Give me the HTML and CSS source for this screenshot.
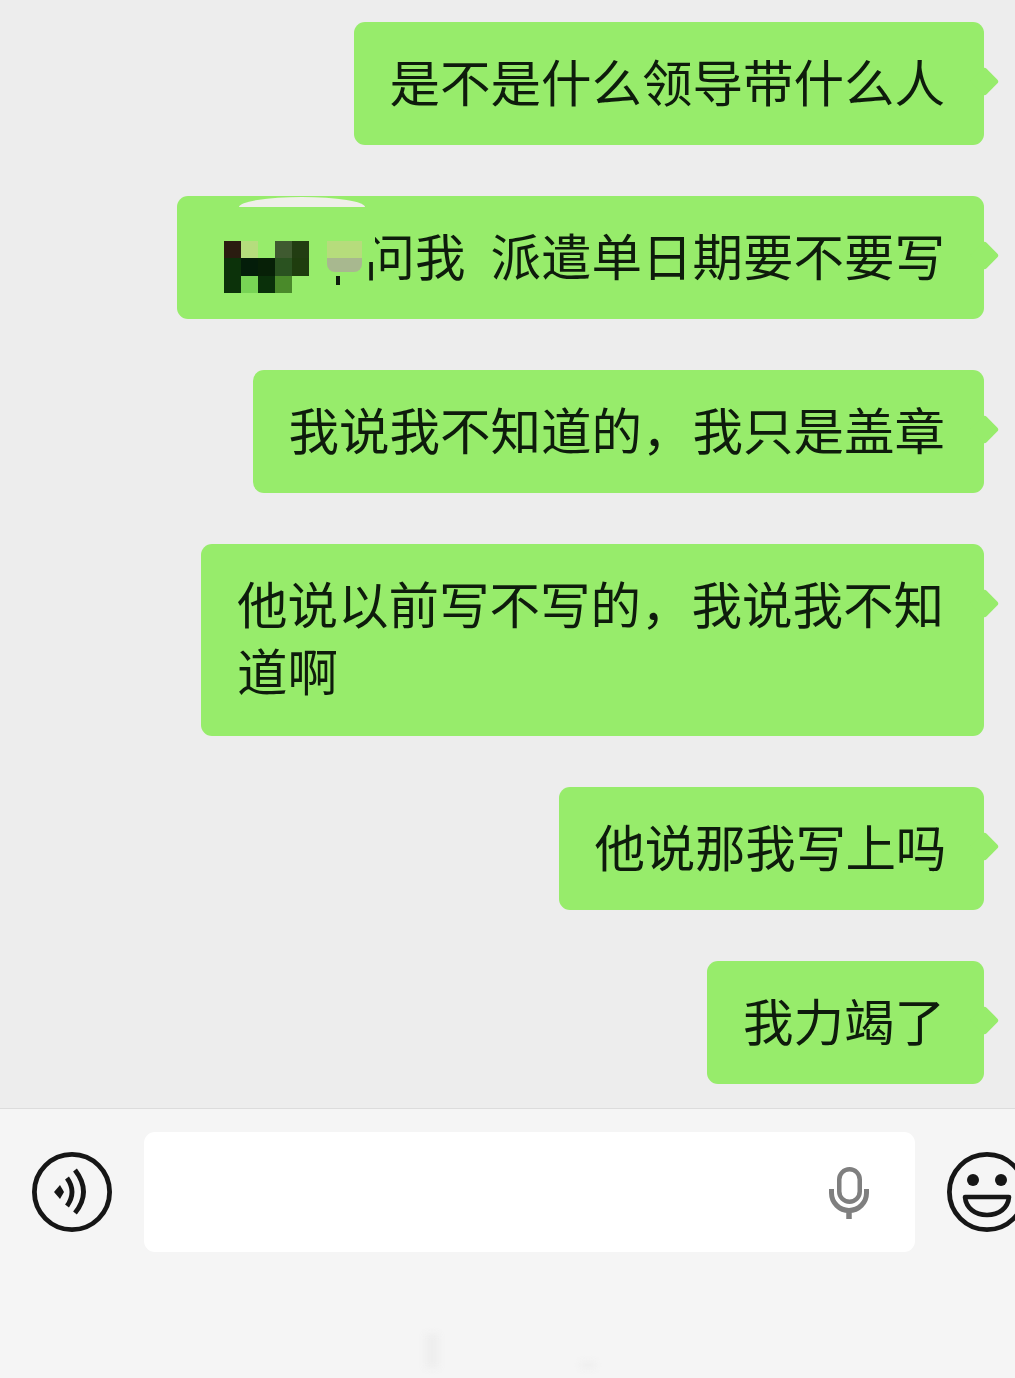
FILE: index.html
```html
<!DOCTYPE html>
<html lang="zh-CN">
<head>
<meta charset="utf-8">
<title>聊天</title>
<link rel="stylesheet" href="styles.css">
</head>
<body>
<main class="chat">
  <div class="messages">
    <div class="bubble">是不是什么领导带什么人</div>
    <div class="bubble"><span class="hidden-name"></span>问我<span class="gap"></span>派遣单日期要不要写
      <div class="mask-arc"></div>
      <div class="mask-wash"></div>
      <span class="stray"></span>
      <div class="mosaic">
        <i class="c1"></i><i class="c2"></i><i class="c3"></i><i class="c4"></i><i class="c5"></i>
        <i class="c6"></i><i class="c7"></i><i class="c8"></i><i class="c9"></i><i class="c10"></i>
        <i class="c6"></i><i class="c11"></i><i class="c12"></i><i class="c13"></i><i class="c3"></i>
      </div>
      <div class="mosaic-side"><i class="s1"></i><i class="s2"></i></div>
    </div>
    <div class="bubble">我说我不知道的，我只是盖章</div>
    <div class="bubble bubble-wrapped">他说以前写不写的，我说我不知道啊</div>
    <div class="bubble bubble-tight">他说那我写上吗</div>
    <div class="bubble">我力竭了</div>
  </div>
  <footer class="composer">
    <svg class="round-icon" viewBox="0 0 80 80" aria-hidden="true">
      <circle cx="40" cy="40" r="37.6" fill="none" stroke="#161616" stroke-width="4.8"/>
      <path d="M22 40 L28 33 L32 40 L28 47 Z" fill="#161616"/>
      <path d="M35 26 Q45 40 35 54" fill="none" stroke="#161616" stroke-width="4.8"/>
      <path d="M43 18 Q60 40 43 61" fill="none" stroke="#161616" stroke-width="4.8"/>
    </svg>
    <div class="input">
      <svg class="mic" viewBox="0 0 42 54" aria-hidden="true">
        <rect x="11.25" y="4.25" width="20.5" height="32.5" rx="10.25" fill="none" stroke="#7f7f7f" stroke-width="4.5"/>
        <path d="M3.5 24 V28 A17.5 17.5 0 0 0 38.5 28 V24" fill="none" stroke="#7f7f7f" stroke-width="5"/>
        <path d="M21 44 V54" fill="none" stroke="#7f7f7f" stroke-width="5.5"/>
      </svg>
    </div>
    <svg class="round-icon" viewBox="0 0 80 80" aria-hidden="true">
      <circle cx="40" cy="40" r="37.6" fill="none" stroke="#161616" stroke-width="4.8"/>
      <circle cx="26" cy="28" r="6" fill="#161616"/>
      <circle cx="54" cy="28" r="6" fill="#161616"/>
      <path d="M18 45 H62 C61 56 52 63 40 63 C28 63 19 56 18 45 Z" fill="none" stroke="#161616" stroke-width="4.6" stroke-linejoin="round"/>
    </svg>
    <span class="smudge smudge-a"></span>
    <span class="smudge smudge-b"></span>
  </footer>
</main>
</body>
</html>
```
FILE: styles.css
```css
* { box-sizing: border-box; }

html, body {
  margin: 0;
  height: 100%;
}

body {
  overflow: hidden;
  background: #ededed;
  font-family: "Noto Sans CJK SC", "Liberation Sans", sans-serif;
}

.chat {
  display: flex;
  flex-direction: column;
  width: 1015px;
  height: 1378px;
}

.messages {
  display: flex;
  flex-direction: column;
  align-items: flex-end;
  gap: 51px;
  height: 1108px;
  padding: 22px 31px 0 0;
  flex-shrink: 0;
}

.bubble {
  position: relative;
  padding: 25px 39px 31px 36px;
  border-radius: 11px;
  background: #97ec6b;
  color: #0e1c0c;
  font-size: 50.5px;
  line-height: 67px;
}

.bubble::after {
  content: "";
  position: absolute;
  top: 49px;
  right: -11px;
  width: 21px;
  height: 21px;
  border-radius: 3px;
  background: #97ec6b;
  transform: rotate(45deg);
}

.bubble-wrapped {
  width: 783px;
  padding-right: 38px;
  padding-bottom: 33px;
}

.bubble-tight {
  padding-right: 38px;
  letter-spacing: -0.3px;
}

.hidden-name {
  display: inline-block;
  width: 152px;
}

.gap {
  display: inline-block;
  width: 25px;
}

.mask-arc {
  position: absolute;
  top: 1px;
  left: 62px;
  width: 126px;
  height: 10px;
  border-radius: 50% 50% 0 0 / 100% 100% 0 0;
  background: #efefe9;
}

.mask-wash {
  position: absolute;
  top: 36px;
  left: 183px;
  width: 15px;
  height: 30px;
  background: #97ec6b;
}

.stray {
  position: absolute;
  top: 80px;
  left: 159px;
  width: 4px;
  height: 9px;
  background: #0e1c0c;
}

.mosaic {
  position: absolute;
  top: 45px;
  left: 47px;
  display: grid;
  grid-template-columns: repeat(5, 17.2px);
  grid-template-rows: repeat(3, 17.3px);
}

.mosaic .c1 { background: #2a1c10; }
.mosaic .c2 { background: #b5dd7d; }
.mosaic .c3 { background: transparent; }
.mosaic .c4 { background: #3f5a30; }
.mosaic .c5 { background: #223d12; }
.mosaic .c6 { background: #0c320a; }
.mosaic .c7 { background: #041d0a; }
.mosaic .c8 { background: #072007; }
.mosaic .c9 { background: #2a5220; }
.mosaic .c10 { background: #1f3d0e; }
.mosaic .c11 { background: #78d455; }
.mosaic .c12 { background: #0a300a; }
.mosaic .c13 { background: #4a8a2a; }

.mosaic-side {
  position: absolute;
  top: 45px;
  left: 150px;
  display: flex;
  flex-direction: column;
  width: 35px;
}

.mosaic-side .s1 {
  height: 17px;
  background: #b6dc7c;
}

.mosaic-side .s2 {
  height: 14px;
  border-radius: 0 0 8px 8px;
  background: #a8b88f;
}

.composer {
  position: relative;
  display: flex;
  align-items: flex-start;
  gap: 32px;
  flex: 1;
  padding: 23px 0 0 32px;
  overflow: hidden;
  border-top: 1px solid #dcdcdc;
  background: #f5f5f5;
}

.round-icon {
  flex-shrink: 0;
  width: 80px;
  height: 80px;
  margin-top: 20px;
}

.input {
  display: flex;
  align-items: center;
  justify-content: flex-end;
  flex-shrink: 0;
  width: 771px;
  height: 120px;
  padding-right: 45px;
  border-radius: 11px;
  background: #fff;
}

.mic {
  width: 42px;
  height: 54px;
}

.smudge {
  position: absolute;
  background: #eeeeee;
  filter: blur(3px);
}

.smudge-a {
  top: 225px;
  left: 425px;
  width: 14px;
  height: 34px;
}

.smudge-b {
  top: 253px;
  left: 580px;
  width: 16px;
  height: 6px;
}
```
